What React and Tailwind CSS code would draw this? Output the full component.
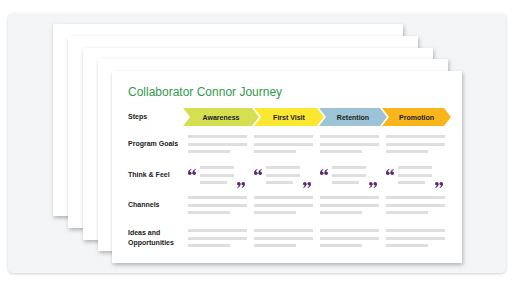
import React from "react";

const clip =
  "[clip-path:polygon(0_0,calc(100%_-_7px)_0,100%_50%,calc(100%_-_7px)_100%,0_100%,7px_50%)]";

function Chevron({ label, cls }) {
  return (
    <div
      className={`flex h-[18px] shrink-0 items-center justify-center text-[7px] font-bold leading-none text-[#222] ${clip} ${cls}`}
    >
      {label}
    </div>
  );
}

function Lines() {
  return (
    <div className="flex w-[59px] flex-col gap-[4.5px]">
      <div className="h-[3px] bg-[#dedede]" />
      <div className="h-[3px] bg-[#dedede]" />
      <div className="h-[3px] w-[42px] bg-[#dedede]" />
    </div>
  );
}

function Mark() {
  return (
    <>
      <circle cx="1.8" cy="4.2" r="1.8" />
      <path d="M0 4.2 C0 2.2 1 0.7 3.1 0 L3.4 0.7 C2.3 1.2 1.7 2.1 1.7 3 Z" />
    </>
  );
}

function QuoteOpen() {
  return (
    <svg width="8" height="6" viewBox="0 0 8 6" className="shrink-0 fill-[#5a2a70]">
      <Mark />
      <g transform="translate(4.4 0)">
        <Mark />
      </g>
    </svg>
  );
}

function QuoteClose() {
  return (
    <svg width="8" height="6" viewBox="0 0 8 6" className="shrink-0 fill-[#5a2a70]">
      <g transform="rotate(180 4 3)">
        <Mark />
        <g transform="translate(4.4 0)">
          <Mark />
        </g>
      </g>
    </svg>
  );
}

function QuoteCell() {
  return (
    <div className="flex h-[18px] w-[59px] items-start">
      <div className="mt-[3px]">
        <QuoteOpen />
      </div>
      <div className="ml-[4px] flex w-[34px] flex-col gap-[4.5px]">
        <div className="h-[3px] bg-[#dedede]" />
        <div className="h-[3px] bg-[#dedede]" />
        <div className="h-[3px] w-[27px] bg-[#dedede]" />
      </div>
      <div className="ml-[3px] mt-[16px]">
        <QuoteClose />
      </div>
    </div>
  );
}

function Row({ label, children, mt }) {
  return (
    <div className={`flex items-center ${mt}`}>
      <div className="w-[60px] shrink-0 text-[7px] font-bold leading-[10px] text-[#222]">{label}</div>
      <div className="flex gap-[7px]">{children}</div>
    </div>
  );
}

const pageBase =
  "col-start-1 row-start-1 h-[192px] w-[350px] bg-white shadow-[1px_2px_4px_rgba(0,0,0,0.28)]";

export default function App() {
  return (
    <div className="h-[290px] w-[518px] overflow-hidden bg-white pl-[8px] pt-[13px] font-['Liberation_Sans',Arial,sans-serif]">
      <div className="h-[260px] w-[498px] rounded-[5px] bg-[#f4f5f6] shadow-[0_1px_3px_rgba(0,0,0,0.18)]">
        <div className="grid">
          <div className={`${pageBase} ml-[45px] mt-[11px]`} />
          <div className={`${pageBase} ml-[60px] mt-[23px]`} />
          <div className={`${pageBase} ml-[75px] mt-[35px]`} />
          <div className={`${pageBase} ml-[90px] mt-[46px]`} />
          <div className={`${pageBase} ml-[104px] mt-[58px] pl-[16px] pt-[14px]`}>
            <div className="h-[15px] text-[12px] leading-[15px] text-[#33994c]">
              Collaborator Connor Journey
            </div>
            <div className="mt-[8px] flex items-center">
              <div className="w-[55px] shrink-0 text-[7px] font-bold leading-[10px] text-[#222]">Steps</div>
              <div className="flex">
                <Chevron label="Awareness" cls="w-[76px] bg-[#d4df52]" />
                <Chevron label="First Visit" cls="ml-[-5px] w-[70px] bg-[#f9e732]" />
                <Chevron label="Retention" cls="ml-[-5px] w-[68px] bg-[#9cc4d6]" />
                <Chevron label="Promotion" cls="ml-[-5px] w-[69px] bg-[#fab41c]" />
              </div>
            </div>
            <Row label="Program Goals" mt="mt-[9px]">
              <Lines />
              <Lines />
              <Lines />
              <Lines />
            </Row>
            <Row label="Think & Feel" mt="mt-[13px]">
              <QuoteCell />
              <QuoteCell />
              <QuoteCell />
              <QuoteCell />
            </Row>
            <Row label="Channels" mt="mt-[12px]">
              <Lines />
              <Lines />
              <Lines />
              <Lines />
            </Row>
            <Row
              label={
                <>
                  Ideas and
                  <br />
                  Opportunities
                </>
              }
              mt="mt-[14px]"
            >
              <Lines />
              <Lines />
              <Lines />
              <Lines />
            </Row>
          </div>
        </div>
      </div>
    </div>
  );
}
